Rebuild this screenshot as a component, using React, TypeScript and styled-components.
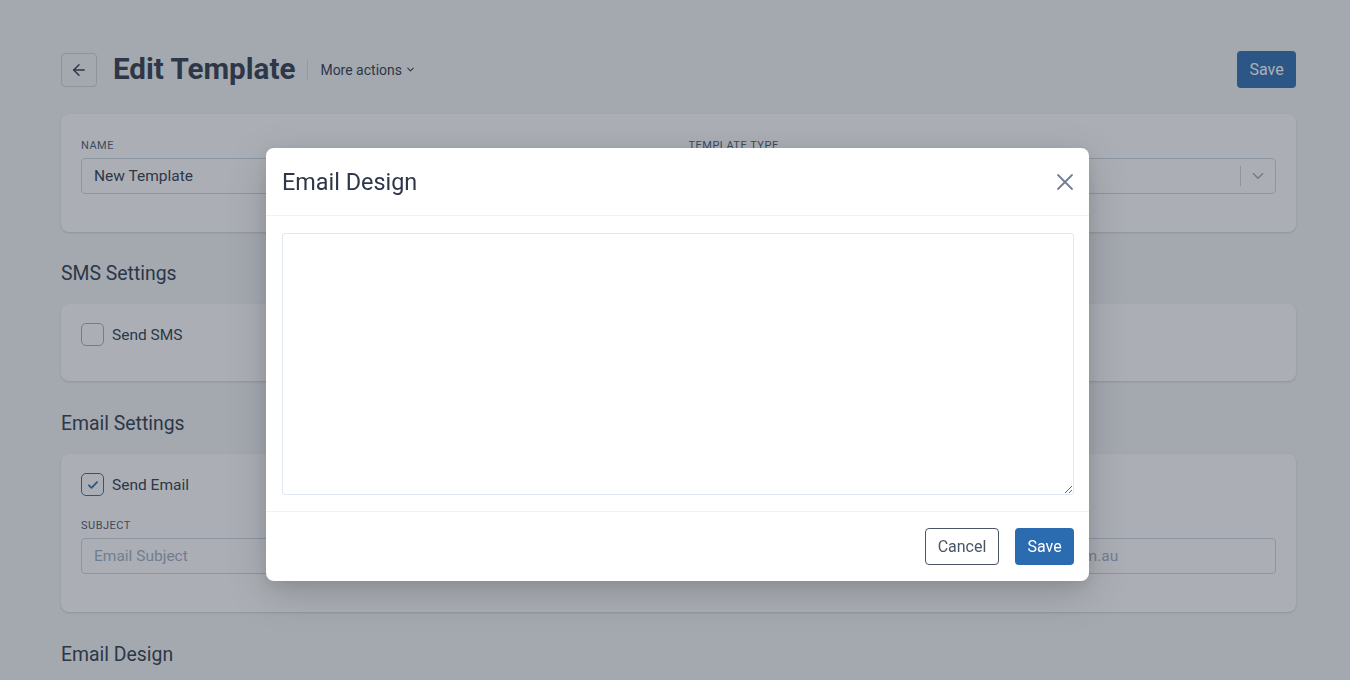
import React from "react";
import styled, { createGlobalStyle } from "styled-components";

const GlobalStyle = createGlobalStyle`
  html, body {
    margin: 0;
    padding: 0;
    background: #f4f5f7;
    font-family: Roboto, "Liberation Sans", Arial, sans-serif;
    color: #2d3748;
  }
  * {
    box-sizing: border-box;
  }
`;

const Page = styled.div`
  padding: 51px 54px 40px 61px;
  height: 680px;
  overflow: hidden;
`;

const Header = styled.div`
  display: flex;
  align-items: center;
  justify-content: space-between;
  height: 37px;
`;

const TitleGroup = styled.div`
  display: flex;
  align-items: center;
`;

const BackButton = styled.button`
  width: 36px;
  height: 34px;
  border: 1px solid #cbd2da;
  border-radius: 4px;
  background: transparent;
  display: flex;
  align-items: center;
  justify-content: center;
  color: #2d3748;
  padding: 0;
  margin-right: 16px;
`;

const Title = styled.h1`
  margin: 0;
  font-size: 29.6px;
  font-weight: 700;
  color: #2d3748;
  line-height: 36px;
  padding-bottom: 2px;
`;

const Divider = styled.span`
  width: 1px;
  height: 20px;
  background: #d4d9df;
  margin: 0 12px 0 12px;
`;

const MoreActions = styled.button`
  border: none;
  background: transparent;
  font-family: inherit;
  font-size: 14px;
  color: #2d3748;
  display: flex;
  align-items: center;
  gap: 3px;
  padding: 0;
`;

const PrimaryButton = styled.button`
  height: 37px;
  width: 59px;
  border: none;
  border-radius: 4px;
  background: #2b6cb0;
  color: #ffffff;
  font-family: inherit;
  font-size: 16px;
`;

const Card = styled.div<{ $pb: number }>`
  background: #ffffff;
  border-radius: 8px;
  box-shadow: 0 1px 3px rgba(0, 0, 0, 0.1), 0 1px 2px rgba(0, 0, 0, 0.06);
  padding: 20px 20px ${(p) => p.$pb}px;
`;

const FirstCard = styled(Card)`
  margin-top: 26px;
`;

const Grid = styled.div`
  display: grid;
  grid-template-columns: 1fr 1fr;
  column-gap: 20px;
`;

const Field = styled.div`
  display: flex;
  flex-direction: column;
`;

const Label = styled.label`
  font-size: 11px;
  letter-spacing: 0.5px;
  text-transform: uppercase;
  color: #4a5568;
  line-height: 12px;
  margin: 6px 0 6px;
`;

const Input = styled.div<{ $placeholder?: boolean }>`
  height: 36px;
  border: 1px solid #cbd5e0;
  border-radius: 4px;
  background: #ffffff;
  padding: 0 12px;
  font-size: 15.5px;
  display: flex;
  align-items: center;
  color: ${(p) => (p.$placeholder ? "#a0aec0" : "#2d3748")};
  white-space: nowrap;
  overflow: hidden;
`;

const Select = styled(Input)`
  justify-content: space-between;
  padding-right: 0;
`;

const SelectIndicator = styled.div`
  display: flex;
  align-items: center;
  height: 100%;
  color: #a0aec0;
`;

const IndicatorLine = styled.span`
  width: 1px;
  height: 20px;
  background: #cbd5e0;
`;

const IndicatorArrow = styled.span`
  width: 34px;
  display: flex;
  justify-content: center;
`;

const SectionTitle = styled.h2<{ $mt: number }>`
  margin: ${(p) => p.$mt}px 0 18px;
  font-size: 19.4px;
  font-weight: 400;
  line-height: 24px;
  color: #2d3748;
`;

const CheckRow = styled.label`
  display: flex;
  align-items: center;
  gap: 8px;
  font-size: 15.5px;
  color: #2d3748;
  margin-top: -1px;
`;

const CheckBox = styled.span<{ $checked?: boolean }>`
  width: 23px;
  height: 23px;
  border-radius: 5px;
  border: 1px solid ${(p) => (p.$checked ? "#2b6cb0" : "#a0aec0")};
  background: #ffffff;
  display: flex;
  align-items: center;
  justify-content: center;
  color: #2b6cb0;
`;

const SubjectGrid = styled(Grid)`
  margin-top: 18px;
`;

const Overlay = styled.div`
  position: fixed;
  inset: 0;
  background: rgba(45, 55, 70, 0.4);
  display: flex;
  justify-content: center;
  align-items: flex-start;
  padding: 148px 0 0 5px;
`;

const Modal = styled.div`
  width: 823px;
  background: #ffffff;
  border-radius: 8px;
  box-shadow: 0 12px 40px rgba(0, 0, 0, 0.18), 0 4px 12px rgba(0, 0, 0, 0.08);
  overflow: hidden;
`;

const ModalHeader = styled.div`
  height: 68px;
  display: flex;
  align-items: center;
  justify-content: space-between;
  padding: 0 15px 0 16px;
  border-bottom: 1px solid #edf2f7;
`;

const ModalTitle = styled.h3`
  margin: 0;
  font-size: 23.4px;
  font-weight: 400;
  color: #2d3748;
`;

const CloseButton = styled.button`
  border: none;
  background: transparent;
  padding: 0;
  width: 18px;
  height: 18px;
  display: flex;
  align-items: center;
  justify-content: center;
  color: #718096;
`;

const ModalBody = styled.div`
  padding: 17px 15px 16px 16px;
  border-bottom: 1px solid #edf2f7;
`;

const TextArea = styled.textarea`
  display: block;
  width: 100%;
  height: 262px;
  border: 1px solid #e2e8f0;
  border-radius: 3px;
  resize: vertical;
  font-family: inherit;
  font-size: 15px;
  outline: none;
`;

const ModalFooter = styled.div`
  display: flex;
  justify-content: flex-end;
  gap: 16px;
  padding: 16px 15px 16px 16px;
`;

const OutlineButton = styled.button`
  height: 37px;
  width: 74px;
  border: 1px solid #4a5568;
  border-radius: 4px;
  background: #ffffff;
  color: #4a5568;
  font-family: inherit;
  font-size: 16px;
`;

const ArrowLeft = () => (
  <svg width="18" height="18" viewBox="0 0 24 24" fill="none" stroke="currentColor" strokeWidth="2" strokeLinecap="round" strokeLinejoin="round">
    <path d="M19 12H5" />
    <path d="M12 19l-7-7 7-7" />
  </svg>
);

const Chevron = ({ size = 10, width = 2 }: { size?: number; width?: number }) => (
  <svg width={size} height={size} viewBox="0 0 24 24" fill="none" stroke="currentColor" strokeWidth={width} strokeLinecap="round" strokeLinejoin="round">
    <path d="M6 9l6 6 6-6" />
  </svg>
);

const CheckIcon = () => (
  <svg width="14" height="14" viewBox="0 0 24 24" fill="none" stroke="currentColor" strokeWidth="3" strokeLinecap="round" strokeLinejoin="round">
    <path d="M5 12.5l4.5 4.5L19 7" />
  </svg>
);

const CloseIcon = () => (
  <svg width="18" height="18" viewBox="0 0 18 18" fill="none" stroke="currentColor" strokeWidth="1.8" strokeLinecap="round">
    <path d="M2 2l14 14" />
    <path d="M16 2L2 16" />
  </svg>
);

export default function App() {
  return (
    <>
      <GlobalStyle />
      <Page>
        <Header>
          <TitleGroup>
            <BackButton aria-label="Back">
              <ArrowLeft />
            </BackButton>
            <Title>Edit Template</Title>
            <Divider />
            <MoreActions>
              More actions <Chevron size={11} width={2.4} />
            </MoreActions>
          </TitleGroup>
          <PrimaryButton>Save</PrimaryButton>
        </Header>

        <FirstCard $pb={38}>
          <Grid>
            <Field>
              <Label>Name</Label>
              <Input>New Template</Input>
            </Field>
            <Field>
              <Label>Template Type</Label>
              <Select $placeholder>
                Select...
                <SelectIndicator>
                  <IndicatorLine />
                  <IndicatorArrow>
                    <Chevron size={18} width={2.2} />
                  </IndicatorArrow>
                </SelectIndicator>
              </Select>
            </Field>
          </Grid>
        </FirstCard>

        <SectionTitle $mt={30}>SMS Settings</SectionTitle>
        <Card $pb={35}>
          <CheckRow>
            <CheckBox />
            Send SMS
          </CheckRow>
        </Card>

        <SectionTitle $mt={31}>Email Settings</SectionTitle>
        <Card $pb={38}>
          <CheckRow>
            <CheckBox $checked>
              <CheckIcon />
            </CheckBox>
            Send Email
          </CheckRow>
          <SubjectGrid>
            <Field>
              <Label>Subject</Label>
              <Input $placeholder>Email Subject</Input>
            </Field>
            <Field>
              <Label>Reply To</Label>
              <Input $placeholder>Reply-to email address, e.g. bookings@yourbusiness.com.au</Input>
            </Field>
          </SubjectGrid>
        </Card>

        <SectionTitle $mt={31}>Email Design</SectionTitle>
      </Page>

      <Overlay>
        <Modal>
          <ModalHeader>
            <ModalTitle>Email Design</ModalTitle>
            <CloseButton aria-label="Close">
              <CloseIcon />
            </CloseButton>
          </ModalHeader>
          <ModalBody>
            <TextArea />
          </ModalBody>
          <ModalFooter>
            <OutlineButton>Cancel</OutlineButton>
            <PrimaryButton>Save</PrimaryButton>
          </ModalFooter>
        </Modal>
      </Overlay>
    </>
  );
}
